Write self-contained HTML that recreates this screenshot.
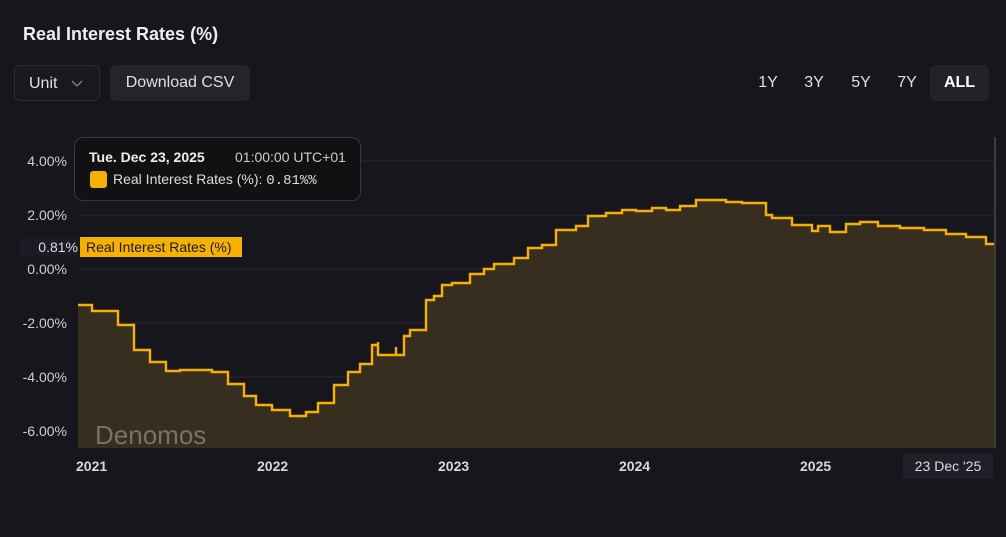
<!DOCTYPE html>
<html><head><style>
body{margin:0;width:1006px;height:537px;background:#16161c;font-family:"Liberation Sans",sans-serif;color:#e6e6e6;overflow:hidden;position:relative}
.a{position:absolute}
.btn{position:absolute;top:65px;height:36px;border-radius:6px;font-size:16px;line-height:36px;color:#e0e0e0}
.yl{position:absolute;left:0;width:67px;text-align:right;font-size:14px;color:#cfcfcf}
.xl{position:absolute;top:458px;font-size:14px;font-weight:bold;color:#d8d8d8}
</style></head><body>
<div class="a" style="left:23px;top:24px;font-size:18px;font-weight:bold;color:#eee">Real Interest Rates (%)</div>
<div class="btn" style="left:14px;width:86px;border:1px solid #2c2c33;box-sizing:border-box;background:#18181e"><span style="margin-left:14px">Unit</span><svg style="position:absolute;left:56px;top:14px" width="12" height="8"><path d="M1 1L6 6L11 1" fill="none" stroke="#888" stroke-width="1.3"/></svg></div>
<div class="btn" style="left:110px;width:140px;background:#24242a;text-align:center">Download CSV</div>
<div class="btn" style="left:748px;width:40px;text-align:center">1Y</div>
<div class="btn" style="left:794px;width:40px;text-align:center">3Y</div>
<div class="btn" style="left:841px;width:40px;text-align:center">5Y</div>
<div class="btn" style="left:887px;width:40px;text-align:center">7Y</div>
<div class="btn" style="left:930px;width:59px;background:#222227;text-align:center;font-weight:bold;color:#fff">ALL</div>
<svg class="a" style="left:0;top:0" width="1006" height="537">
<g stroke="#2a2a31" stroke-width="1">
<line x1="78" y1="161" x2="994" y2="161"/><line x1="78" y1="215" x2="994" y2="215"/><line x1="78" y1="269" x2="994" y2="269"/><line x1="78" y1="323" x2="994" y2="323"/><line x1="78" y1="377" x2="994" y2="377"/><line x1="78" y1="431" x2="994" y2="431"/></g>
<line x1="995" y1="137" x2="995" y2="448" stroke="#666" stroke-width="1"/>
<path d="M78 305H92V311H118V325H134V350H150V362H166V371H180V370H212V372H228V384H244V396H256V405H272V410H290V416H306V412H318V403H334V385H348V372H360V364H372V345H378V342V355H396V347V355H404V336H410V330H426V300H434V296H442V285H452V283H470V274H484V269H494V264H514V258H528V248H542V245H556V230H576V226H588V216H606V213H622V210H636V211H652V208H666V210H680V206H696V200H726V202H742V203H766V215H772V218H792V225H812V231H818V226H830V232H846V224H860V222H878V226H900V228H924V230H946V234H966V237H986V244H994V448H78Z" fill="#3b3120" opacity="0.9"/>
<path d="M78 305H92V311H118V325H134V350H150V362H166V371H180V370H212V372H228V384H244V396H256V405H272V410H290V416H306V412H318V403H334V385H348V372H360V364H372V345H378V342V355H396V347V355H404V336H410V330H426V300H434V296H442V285H452V283H470V274H484V269H494V264H514V258H528V248H542V245H556V230H576V226H588V216H606V213H622V210H636V211H652V208H666V210H680V206H696V200H726V202H742V203H766V215H772V218H792V225H812V231H818V226H830V232H846V224H860V222H878V226H900V228H924V230H946V234H966V237H986V244H994" fill="none" stroke="#f5b000" stroke-width="2.4"/>
</svg>
<div class="yl" style="top:153px">4.00%</div>
<div class="yl" style="top:207px">2.00%</div>
<div class="yl" style="top:261px">0.00%</div>
<div class="yl" style="top:315px">-2.00%</div>
<div class="yl" style="top:369px">-4.00%</div>
<div class="yl" style="top:423px">-6.00%</div>
<div class="a" style="left:20px;top:237px;width:58px;height:20px;background:#1a1b24;font-size:14px;line-height:20px;text-align:right;color:#ddd">0.81%</div>
<div class="a" style="left:80px;top:237px;width:162px;height:20px;background:#f5b000;color:#1a1a1a;font-size:14px;line-height:20px;text-indent:6px">Real Interest Rates (%)</div>
<div class="a" style="left:95px;top:420px;font-size:26px;color:#77736a">Denomos</div>
<div class="xl" style="left:76px">2021</div>
<div class="xl" style="left:257px">2022</div>
<div class="xl" style="left:438px">2023</div>
<div class="xl" style="left:619px">2024</div>
<div class="xl" style="left:800px">2025</div>
<div class="a" style="left:903px;top:453px;width:90px;height:26px;background:#1f2029;font-size:14px;line-height:26px;text-align:center;color:#ddd">23 Dec '25</div>
<div class="a" style="left:74px;top:137px;width:287px;height:64px;border:1px solid #38383e;border-radius:9px;background:#111114;box-sizing:border-box">
<div class="a" style="left:14px;top:11px;font-size:14px;font-weight:bold;color:#eee">Tue. Dec 23, 2025</div>
<div class="a" style="left:160px;top:11px;font-size:14px;color:#ccc">01:00:00 UTC+01</div>
<div class="a" style="left:15px;top:33px;width:17px;height:17px;border-radius:3px;background:#f5b000"></div>
<div class="a" style="left:38px;top:33px;font-size:14px;color:#ddd">Real Interest Rates (%): <span style="font-family:'Liberation Mono',monospace">0.81%%</span></div>
</div>
</body></html>
